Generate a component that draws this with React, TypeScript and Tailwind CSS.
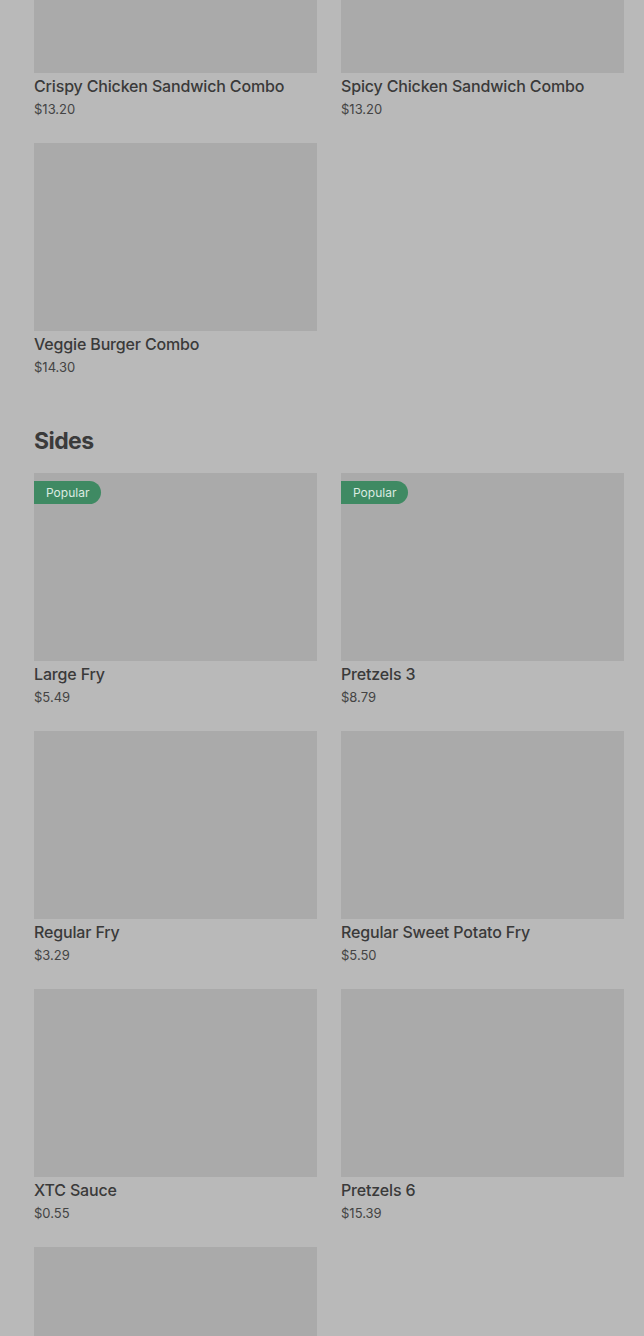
import React from 'react';

interface Item {
  name: string;
  price: string;
  popular?: boolean;
}

const COMBOS: Item[] = [
  { name: 'Crispy Chicken Sandwich Combo', price: '$13.20' },
  { name: 'Spicy Chicken Sandwich Combo', price: '$13.20' },
  { name: 'Veggie Burger Combo', price: '$14.30' },
];

const SIDES: Item[] = [
  { name: 'Large Fry', price: '$5.49', popular: true },
  { name: 'Pretzels 3', price: '$8.79', popular: true },
  { name: 'Regular Fry', price: '$3.29' },
  { name: 'Regular Sweet Potato Fry', price: '$5.50' },
  { name: 'XTC Sauce', price: '$0.55' },
  { name: 'Pretzels 6', price: '$15.39' },
  { name: 'Small Fry', price: '$2.49' },
];

function ItemCard({ item }: { item: Item }) {
  return (
    <div className="flex flex-col">
      <div className="relative h-[188px] bg-[#aaaaaa]">
        {item.popular && (
          <span className="absolute left-0 top-2 h-[23px] flex items-center pl-3 pr-3 rounded-r-full bg-[#3f8a63] text-[12px] text-[#dcebe1]">
            Popular
          </span>
        )}
      </div>
      <div className="pt-[3px] text-[16px] leading-[20px] font-medium tracking-[-0.01em] text-[#3a3a3a]">{item.name}</div>
      <div className="mt-[3px] text-[13px] leading-[20px] text-[#444444]">{item.price}</div>
    </div>
  );
}

export default function App() {
  return (
    <div
      className="min-h-screen overflow-hidden bg-[#b9b9b9] pl-[34px] pr-5"
      style={{ fontFamily: 'Inter, "Noto Sans", sans-serif' }}
    >
      <div className="-mt-[115px] grid grid-cols-2 gap-x-6 gap-y-6">
        {COMBOS.map((item) => (
          <ItemCard key={item.name} item={item} />
        ))}
      </div>

      <h2 className="mt-12 mb-4 text-[23px] leading-[32px] font-bold tracking-tight text-[#3b3b3b]">Sides</h2>
      <div className="grid grid-cols-2 gap-x-6 gap-y-6 pb-10">
        {SIDES.map((item) => (
          <ItemCard key={item.name} item={item} />
        ))}
      </div>
    </div>
  );
}
